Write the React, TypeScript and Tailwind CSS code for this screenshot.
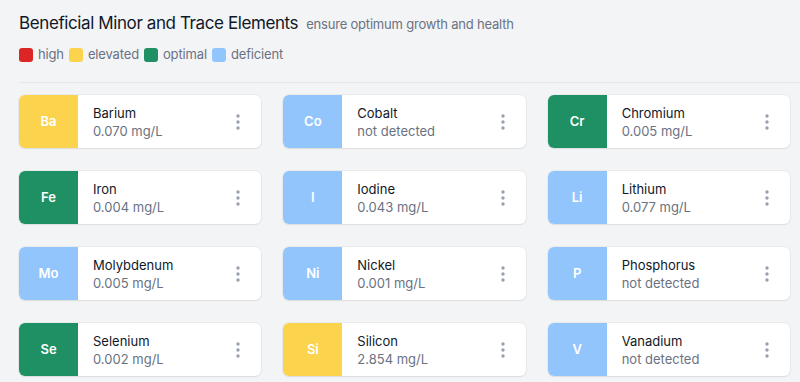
import React from 'react';

type Level = 'high' | 'elevated' | 'optimal' | 'deficient';

const levelColor: Record<Level, string> = {
  high: 'bg-[#dc2626]',
  elevated: 'bg-[#fcd34d]',
  optimal: 'bg-[#1e9064]',
  deficient: 'bg-[#93c5fd]',
};

const elements: { symbol: string; name: string; value: string; level: Level }[] = [
  { symbol: 'Ba', name: 'Barium', value: '0.070 mg/L', level: 'elevated' },
  { symbol: 'Co', name: 'Cobalt', value: 'not detected', level: 'deficient' },
  { symbol: 'Cr', name: 'Chromium', value: '0.005 mg/L', level: 'optimal' },
  { symbol: 'Fe', name: 'Iron', value: '0.004 mg/L', level: 'optimal' },
  { symbol: 'I', name: 'Iodine', value: '0.043 mg/L', level: 'deficient' },
  { symbol: 'Li', name: 'Lithium', value: '0.077 mg/L', level: 'deficient' },
  { symbol: 'Mo', name: 'Molybdenum', value: '0.005 mg/L', level: 'deficient' },
  { symbol: 'Ni', name: 'Nickel', value: '0.001 mg/L', level: 'deficient' },
  { symbol: 'P', name: 'Phosphorus', value: 'not detected', level: 'deficient' },
  { symbol: 'Se', name: 'Selenium', value: '0.002 mg/L', level: 'optimal' },
  { symbol: 'Si', name: 'Silicon', value: '2.854 mg/L', level: 'elevated' },
  { symbol: 'V', name: 'Vanadium', value: 'not detected', level: 'deficient' },
];

const Kebab = () => (
  <svg width="4" height="16" viewBox="0 0 4 16" className="text-gray-400" fill="currentColor">
    <circle cx="2" cy="2" r="1.7" />
    <circle cx="2" cy="8" r="1.7" />
    <circle cx="2" cy="14" r="1.7" />
  </svg>
);

const App: React.FC = () => {
  return (
    <div className="min-h-screen w-full bg-[#f3f4f6] pl-[19px] font-['Inter','Liberation_Sans',sans-serif] overflow-hidden">
      <div className="pt-[11px]">
        <div className="flex items-baseline gap-2 h-[22px]">
          <h2 className="text-[17px] text-gray-900 tracking-[-0.4px]">Beneficial Minor and Trace Elements</h2>
          <span className="text-[13px] text-gray-500 tracking-[-0.2px]">ensure optimum growth and health</span>
        </div>
        <div className="flex items-center mt-[14px] h-[16px] text-[13px] text-gray-500 tracking-[-0.15px]">
          {(['high', 'elevated', 'optimal', 'deficient'] as Level[]).map(l => (
            <div key={l} className="flex items-center mr-[5px]">
              <span className={`w-[14px] h-[14px] rounded-[3px] ${levelColor[l]} mr-[5px]`} />
              <span>{l}</span>
            </div>
          ))}
        </div>
      </div>
      <div className="mt-[19px] border-t border-gray-200" />
      <div className="grid grid-cols-3 gap-x-[22px] gap-y-[23px] pt-[12px] pr-[10px]">
        {elements.map(el => (
          <div key={el.symbol} className="flex h-[53px] bg-white rounded-md shadow-[0_0_0_1px_rgba(0,0,0,0.04),0_1px_2px_rgba(0,0,0,0.06)] overflow-hidden">
            <div className={`w-[59px] shrink-0 flex items-center justify-center ${levelColor[el.level]} text-white text-[13px] font-semibold`}>
              {el.symbol}
            </div>
            <div className="flex-1 flex items-center pl-[15px] pr-[21px]">
              <div className="flex-1 leading-[18px]">
                <div className="text-[13px] text-gray-900">{el.name}</div>
                <div className="text-[13px] text-gray-500">{el.value}</div>
              </div>
              <Kebab />
            </div>
          </div>
        ))}
      </div>
    </div>
  );
};

export default App;
